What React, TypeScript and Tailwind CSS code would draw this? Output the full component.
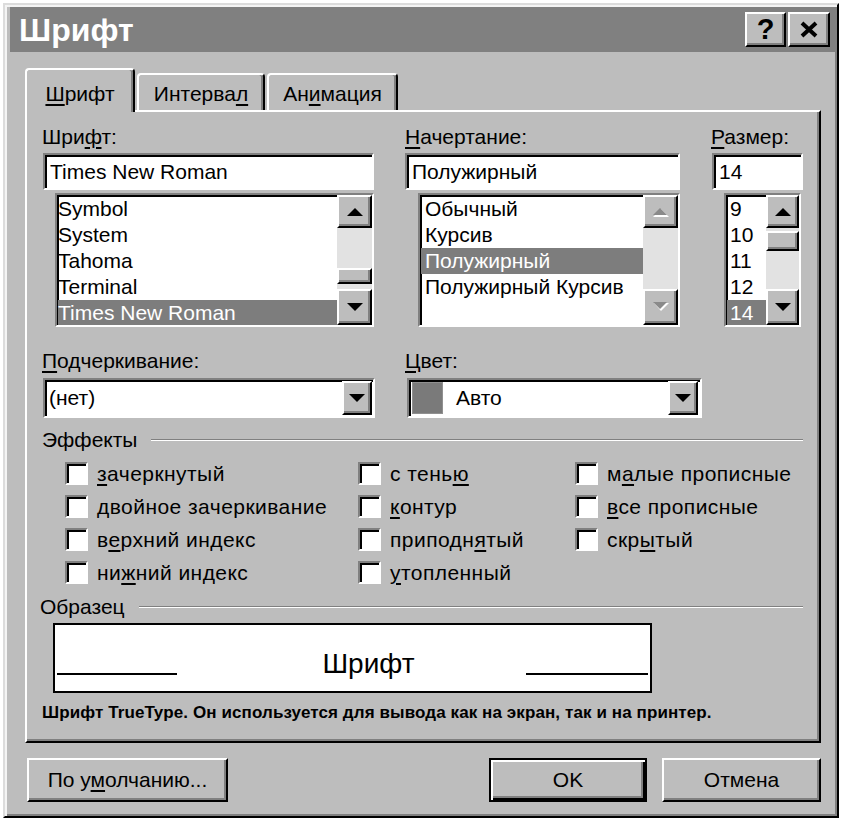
import React from "react";

const U = ({ children }: { children: React.ReactNode }) => (
  <span className="underline decoration-[2px] underline-offset-[3px]">{children}</span>
);

const raised =
  "border-2 border-t-white border-l-white border-r-black border-b-black shadow-[inset_-2px_-2px_0_#808080]";
const sunken =
  "border-2 border-t-[#808080] border-l-[#808080] border-r-white border-b-white shadow-[inset_2px_2px_0_#000]";

const UpArrow = ({ disabled }: { disabled?: boolean }) =>
  disabled ? (
    <svg width="18" height="10" viewBox="0 0 18 10">
      <path d="M9 2 L17 10 L1 10Z" fill="#ffffff" />
      <path d="M8 1 L15 8 L1 8Z" fill="#8a8a8a" />
    </svg>
  ) : (
    <svg width="16" height="8" viewBox="0 0 16 8">
      <path d="M8 0 L16 8 L0 8Z" fill="#000" />
    </svg>
  );

const DownArrow = ({ disabled }: { disabled?: boolean }) =>
  disabled ? (
    <svg width="18" height="10" viewBox="0 0 18 10">
      <path d="M2 1 L17 1 L9 9Z" fill="#ffffff" />
      <path d="M1 0 L15 0 L8 7Z" fill="#8a8a8a" />
    </svg>
  ) : (
    <svg width="16" height="8" viewBox="0 0 16 8">
      <path d="M0 0 L16 0 L8 8Z" fill="#000" />
    </svg>
  );

function Scrollbar({
  width,
  thumb,
  disabled,
}: {
  width: string;
  thumb: "top" | "bottom" | "none";
  disabled?: boolean;
}) {
  return (
    <div className={`${width} h-full flex flex-col`}>
      <div className={`${raised} h-[33px] bg-[#bdbdbd] flex items-center justify-center`}>
        <UpArrow disabled={disabled} />
      </div>
      <div
        className={`flex-1 bg-[#e2e2e2] flex flex-col ${
          thumb === "bottom" ? "justify-end pb-[5px]" : "justify-start pt-[3px]"
        }`}
      >
        {thumb !== "none" && (
          <div className={`${raised} bg-[#bdbdbd] ${thumb === "bottom" ? "h-[16px]" : "h-[20px]"}`} />
        )}
      </div>
      <div className={`${raised} h-[36px] bg-[#bdbdbd] flex items-center justify-center`}>
        <DownArrow disabled={disabled} />
      </div>
    </div>
  );
}

function ListBox({
  items,
  selected,
  className,
  sbWidth,
  thumb,
  disabled,
  itemPad,
}: {
  items: string[];
  selected: number;
  className: string;
  sbWidth: string;
  thumb: "top" | "bottom" | "none";
  disabled?: boolean;
  itemPad: string;
}) {
  return (
    <div className={`${sunken} bg-white h-[134px] flex ${className}`}>
      <div className="flex-1 overflow-hidden pt-[1px] pl-[1px]">
        {items.map((it, i) => (
          <div
            key={it}
            className={`h-[26px] leading-[26px] ${itemPad} whitespace-nowrap ${
              i === selected ? "bg-[#7d7d7d] text-white" : ""
            }`}
          >
            {it}
          </div>
        ))}
      </div>
      <Scrollbar width={sbWidth} thumb={thumb} disabled={disabled} />
    </div>
  );
}

const DropBtn = ({ className }: { className: string }) => (
  <div className={`${raised} bg-[#bdbdbd] w-[30px] h-[34px] flex items-center justify-center ${className}`}>
    <DownArrow />
  </div>
);

const Check = ({ children }: { children: React.ReactNode }) => (
  <div className="h-[33px] flex items-center gap-[9px] whitespace-nowrap">
    <div className={`${sunken} bg-white w-[23px] h-[23px] shrink-0`} />
    <span className="tracking-[0.45px]">{children}</span>
  </div>
);

export default function App() {
  return (
    <div className="w-[848px] h-[826px] bg-white pt-[3px] pl-[3px] font-['Liberation_Sans',Arial,sans-serif] text-[21px] text-black">
      <div className="w-[836px] h-[815px] bg-[#bdbdbd] border-2 border-t-[#dcdcdc] border-l-[#dcdcdc] border-r-black border-b-black shadow-[inset_2px_2px_0_#f4f4f4,inset_-2px_-2px_0_#808080] flex flex-col">
        {/* Title bar */}
        <div className="mt-[2px] ml-[5px] mr-[1px] h-[45px] bg-[#808080] flex items-center justify-between pl-[9px] pr-[6px]">
          <span className="text-white font-bold text-[32px] leading-[36px]">Шрифт</span>
          <div className="flex gap-[2px]">
            <div className={`${raised} bg-[#bdbdbd] w-[41px] h-[35px] flex items-center justify-center font-bold text-[29px] leading-none`}>
              ?
            </div>
            <div className={`${raised} bg-[#bdbdbd] w-[42px] h-[35px] flex items-center justify-center`}>
              <svg width="18" height="17" viewBox="0 0 18 17">
                <path d="M2 2 L16 15 M16 2 L2 15" stroke="#000" strokeWidth="4" />
              </svg>
            </div>
          </div>
        </div>

        {/* Body */}
        <div className="ml-[20px] mr-[16px] mt-[16px] flex flex-col">
          {/* Tabs */}
          <div className="h-[42px] flex items-end">
            <div className="relative z-10 w-[110px] h-[44px] -mb-[2px] bg-[#bdbdbd] border-t-2 border-l-2 border-r-2 border-t-white border-l-white border-r-black rounded-t-[4px] shadow-[inset_-2px_0_0_#808080] pt-[12px] text-center leading-[24px]">
              <U>Ш</U>рифт
            </div>
            <div className="ml-[2px] w-[128px] h-[37px] border-t-2 border-l-2 border-r-2 border-t-white border-l-white border-r-black rounded-t-[4px] shadow-[inset_-2px_0_0_#808080] pt-[7px] text-center leading-[24px]">
              Интерва<U>л</U>
            </div>
            <div className="ml-[2px] w-[131px] h-[37px] border-t-2 border-l-2 border-r-2 border-t-white border-l-white border-r-black rounded-t-[4px] shadow-[inset_-2px_0_0_#808080] pt-[7px] text-center leading-[24px]">
              Ан<U>и</U>мация
            </div>
          </div>

          {/* Panel */}
          <div className="h-[633px] border-2 border-t-white border-l-white border-r-black border-b-black shadow-[inset_-2px_-2px_0_#808080] pt-[13px] pl-[16px] pr-[16px] flex flex-col">
            {/* Top lists */}
            <div className="flex">
              <div className="w-[331px] flex flex-col">
                <div className="h-[24px] leading-[24px] -ml-[1px]">
                  Шри<U>ф</U>т:
                </div>
                <div className={`${sunken} bg-white mt-[4px] h-[37px] pl-[5px] leading-[33px]`}>Times New Roman</div>
                <ListBox
                  className="mt-[3px] ml-[12px]"
                  items={["Symbol", "System", "Tahoma", "Terminal", "Times New Roman"]}
                  selected={4}
                  sbWidth="w-[35px]"
                  thumb="bottom"
                  itemPad="pl-[0px]"
                />
              </div>
              <div className="ml-[31px] w-[275px] flex flex-col">
                <div className="h-[24px] leading-[24px]">
                  <U>Н</U>ачертание:
                </div>
                <div className={`${sunken} bg-white mt-[4px] h-[37px] pl-[5px] leading-[33px]`}>Полужирный</div>
                <ListBox
                  className="mt-[3px] ml-[13px]"
                  items={["Обычный", "Курсив", "Полужирный", "Полужирный Курсив"]}
                  selected={2}
                  sbWidth="w-[35px]"
                  thumb="none"
                  disabled
                  itemPad="pl-[4px]"
                />
              </div>
              <div className="ml-[32px] w-[91px] flex flex-col">
                <div className="h-[24px] leading-[24px] -ml-[1px]">
                  <U>Р</U>азмер:
                </div>
                <div className={`${sunken} bg-white mt-[4px] h-[37px] pl-[5px] leading-[33px]`}>14</div>
                <ListBox
                  className="mt-[3px] ml-[12px] w-[77px]"
                  items={["9", "10", "11", "12", "14"]}
                  selected={4}
                  sbWidth="w-[33px]"
                  thumb="top"
                  itemPad="pl-[3px]"
                />
              </div>
            </div>

            {/* Underline / colour */}
            <div className="flex mt-[22px]">
              <div className="w-[331px] flex flex-col">
                <div className="h-[24px] leading-[24px] -ml-[1px]">
                  <U>П</U>одчеркивание:
                </div>
                <div className={`${sunken} bg-white mt-[5px] w-[332px] h-[40px] flex items-center justify-between pl-[4px]`}>
                  <span>(нет)</span>
                  <DropBtn className="mr-[1px]" />
                </div>
              </div>
              <div className="ml-[31px] flex flex-col">
                <div className="h-[24px] leading-[24px]">
                  <U>Ц</U>вет:
                </div>
                <div className={`${sunken} bg-white mt-[5px] ml-[2px] w-[295px] h-[40px] flex items-center`}>
                  <div className="ml-[3px] w-[31px] h-[32px] bg-[#7a7a7a] border border-[#909090]" />
                  <span className="ml-[13px] flex-1">Авто</span>
                  <DropBtn className="mr-[2px]" />
                </div>
              </div>
            </div>

            {/* Effects */}
            <div className="mt-[10px] h-[24px] flex items-center">
              <span className="-ml-[1px] leading-[24px]">Эффекты</span>
              <div className="flex-1 ml-[14px] h-[2px] border-t border-t-[#808080] border-b border-b-white" />
            </div>
            <div className="mt-[5px] pl-[22px] flex">
              <div className="w-[293px] flex flex-col">
                <Check>
                  <U>з</U>ачеркнутый
                </Check>
                <Check>
                  <U>д</U>войное зачеркивание
                </Check>
                <Check>
                  в<U>е</U>рхний индекс
                </Check>
                <Check>
                  ни<U>ж</U>ний индекс
                </Check>
              </div>
              <div className="w-[217px] flex flex-col">
                <Check>
                  с тень<U>ю</U>
                </Check>
                <Check>
                  <U>к</U>онтур
                </Check>
                <Check>
                  приподн<U>я</U>тый
                </Check>
                <Check>
                  <U>у</U>топленный
                </Check>
              </div>
              <div className="flex-1 flex flex-col">
                <Check>
                  м<U>а</U>лые прописные
                </Check>
                <Check>
                  <U>в</U>се прописные
                </Check>
                <Check>
                  скр<U>ы</U>тый
                </Check>
              </div>
            </div>

            {/* Sample */}
            <div className="mt-[6px] h-[24px] flex items-center">
              <span className="-ml-[3px] leading-[24px]">Образец</span>
              <div className="flex-1 ml-[14px] h-[2px] border-t border-t-[#808080] border-b border-b-white" />
            </div>
            <div className="mt-[4px] ml-[10px] w-[599px] h-[70px] border-2 border-black bg-white flex items-start">
              <div className="mt-[48px] ml-[2px] w-[120px] h-[2px] bg-black" />
              <div className="flex-1 pt-[23px] pl-[34px] text-center text-[28px] leading-[32px]">Шрифт</div>
              <div className="mt-[48px] mr-[2px] w-[122px] h-[2px] bg-black" />
            </div>
            <div className="mt-[10px] -ml-[1px] text-[17px] tracking-[0.1px] font-bold leading-[20px] whitespace-nowrap">
              Шрифт TrueType. Он используется для вывода как на экран, так и на принтер.
            </div>
          </div>

          {/* Buttons */}
          <div className="mt-[15px] flex justify-between">
            <div className={`${raised} bg-[#bdbdbd] ml-[2px] w-[201px] h-[44px] flex items-center justify-center`}>
              <span>
                По у<U>м</U>олчанию...
              </span>
            </div>
            <div className="flex gap-[15px]">
              <div className="border-2 border-black bg-[#bdbdbd] w-[158px] h-[44px] flex items-center justify-center shadow-[inset_2px_2px_0_#fff,inset_-2px_-2px_0_#000,inset_-4px_-4px_0_#808080]">
                OK
              </div>
              <div className={`${raised} bg-[#bdbdbd] w-[159px] h-[44px] flex items-center justify-center`}>
                Отмена
              </div>
            </div>
          </div>
        </div>
      </div>
    </div>
  );
}
